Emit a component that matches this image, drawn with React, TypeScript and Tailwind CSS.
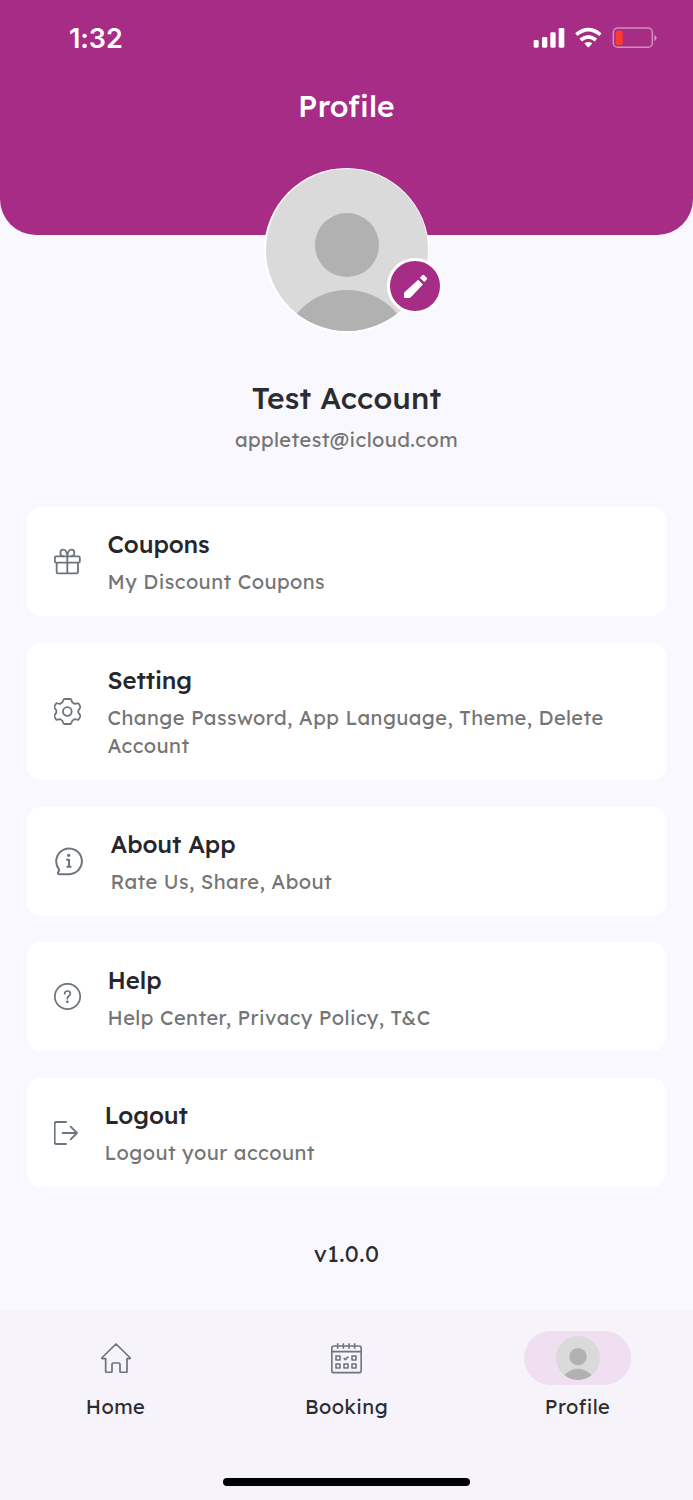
import React from 'react';

const GiftIcon = () => (
  <svg viewBox="102 145 81 81" className="w-[27px] h-[27px] shrink-0" fill="none" stroke="currentColor" strokeWidth="5.5" strokeLinejoin="round">
    <rect x="104.5" y="170" width="75" height="19" rx="4" />
    <path d="M110 189v28q0 4 4 4h56q4 0 4-4v-28M142 170v51" />
    <path d="M142 170c-1-11-4-20-12-20-6 0-9 4-9 9 0 7 5 11 11 11M142 170c1-11 4-20 12-20 6 0 9 4 9 9 0 7-5 11-11 11" />
  </svg>
);

const GearIcon = () => (
  <svg viewBox="101 174 81 81" className="w-[27px] h-[27px] shrink-0" fill="none" stroke="currentColor" strokeWidth="5.5" strokeLinejoin="round">
    <path d="M132 177h18q2 0 3 3l2 5q1 3 4 4l3 2q2 1 4 0l5-1q3-1 4 1l5 9q1 2-1 4l-3 4q-2 2-2 4v5q0 2 2 4l3 4q2 2 1 4l-5 9q-1 2-4 1l-5-1q-2-1-4 0l-3 2q-3 1-4 4l-2 5q-1 3-3 3h-18q-2 0-3-3l-2-5q-1-3-4-4l-3-2q-2-1-4 0l-5 1q-3 1-4-1l-5-9q-1-2 1-4l3-4q2-2 2-4v-5q0-2-2-4l-3-4q-2-2-1-4l5-9q1-2 4-1l5 1q2 1 4 0l3-2q3-1 4-4l2-5q1-3 3-3z" />
    <circle cx="141" cy="214.5" r="13" />
  </svg>
);

const InfoIcon = () => (
  <svg viewBox="102 138 90 90" className="w-[30px] h-[30px] shrink-0" fill="none" stroke="currentColor" strokeWidth="6" strokeLinecap="round" strokeLinejoin="round">
    <path d="M147 222.5h-28q-6 0-5-5l3-6q1-2-1-5a38.5 38.5 0 1 1 31 16z" />
    <path d="M141 179h6v21M142 200h10" />
    <circle cx="146" cy="166" r="5" fill="currentColor" stroke="none" />
  </svg>
);

const HelpIcon = () => (
  <svg viewBox="101 144 81 81" className="w-[27px] h-[27px] shrink-0" fill="none" stroke="currentColor" strokeWidth="5.2" strokeLinecap="round" strokeLinejoin="round">
    <circle cx="141.5" cy="184.5" r="38" />
    <path d="M133 176c0-5 4-8 9-8s8 3 8 8c0 7-9 7-9 15" />
    <circle cx="141" cy="200.5" r="4.2" fill="currentColor" stroke="none" />
  </svg>
);

const LogoutIcon = () => (
  <svg viewBox="101 556 72 72" className="w-[24px] h-[24px] shrink-0" fill="none" stroke="currentColor" strokeWidth="5.5" strokeLinecap="round" strokeLinejoin="round">
    <path d="M137 559h-29q-5 0-5 5v56q0 5 5 5h29M127 592h43M151 573l19 19-19 19" />
  </svg>
);

const HomeIcon = () => (
  <svg viewBox="122 129 90 90" className="w-[30px] h-[30px]" fill="none" stroke="currentColor" strokeWidth="5.2" strokeLinejoin="round">
    <path d="M167 132l43 42q-1 2-3 2h-7v38q0 3-3 3h-16q-2 0-2-3v-21q0-4-4-4h-16q-4 0-4 4v21q0 3-3 3h-13q-3 0-3-3v-38h-9q-2 0-3-2z" />
  </svg>
);

const CalendarIcon = () => (
  <svg viewBox="814 129 93 93" className="w-[31px] h-[31px]" fill="none" stroke="currentColor" strokeWidth="4.8" strokeLinejoin="round">
    <rect x="816.5" y="138" width="88" height="80" rx="6" />
    <path d="M816 155h88M834 130v16M851 130v16M868 130v16M885 130v16" />
    <path d="M829 168h12v12h-12zM877 168h12v12h-12zM829 192h12v12h-12zM853 192h12v12h-12zM877 192h12v12h-12z" />
    <path d="M852 174l5 5 9-9" />
  </svg>
);

const PencilIcon = () => (
  <svg viewBox="455 355 80 80" className="w-[27px] h-[27px]" fill="white">
    <path d="M464 429q-3 0-3-3v-11q0-2 2-4l40-36 14 14-36 38q-2 2-5 2z" />
    <path d="M508 369l7-7q3-3 6 0l7 7q3 3 0 6l-7 7z" />
  </svg>
);

const Avatar: React.FC<{ className: string }> = ({ className }) => (
  <svg viewBox="0 0 162 162" className={className}>
    <rect width="162" height="162" fill="#dadada" />
    <circle cx="81" cy="76" r="32" fill="#b1b1b1" />
    <circle cx="81" cy="186" r="65" fill="#b1b1b1" />
  </svg>
);

const MENU = [
  { title: 'Coupons', detail: 'My Discount Coupons', icon: <GiftIcon /> },
  { title: 'Setting', detail: 'Change Password, App Language, Theme, Delete Account', icon: <GearIcon /> },
  { title: 'About App', detail: 'Rate Us, Share, About', icon: <InfoIcon /> },
  { title: 'Help', detail: 'Help Center, Privacy Policy, T&C', icon: <HelpIcon /> },
  { title: 'Logout', detail: 'Logout your account', icon: <LogoutIcon /> },
];

const StatusBar = () => (
  <div className="flex justify-between items-start pt-[22px] pl-[69px] pr-[35px] h-[76px]">
    <span className="font-['Inter',sans-serif] text-[27px] leading-[33px] font-semibold tracking-[-0.1px]">1:32</span>
    <svg viewBox="40 30 375 75" className="w-[125px] h-[25px] mt-[3px]" fill="white">
      <rect x="42" y="75" width="15" height="23" rx="4" />
      <rect x="67" y="66" width="16" height="32" rx="4" />
      <rect x="92" y="52" width="16" height="46" rx="4" />
      <rect x="117" y="39" width="17" height="59" rx="4" />
      <g fill="none" stroke="white" strokeWidth="11">
        <path d="M170 59q36-30 72 0" />
        <path d="M183 75q23-19 46 0" />
      </g>
      <path d="M194 85q12-8 24 0l-9 10q-3 3-6 0z" />
      <rect x="281" y="39" width="117" height="58" rx="13" fill="none" stroke="#d08fbd" strokeWidth="4.5" />
      <path d="M404 60q7 3 7 9t-7 9z" fill="#d08fbd" />
      <rect x="288" y="47" width="21" height="43" rx="6" fill="#ff3b30" />
    </svg>
  </div>
);

const BottomNav = () => (
  <nav className="h-[191px] bg-[#f7f3fb] flex flex-col justify-between">
    <div className="grid grid-cols-3 pt-[22px] text-[20px] leading-7 text-[#2b2c31] tracking-[0.45px]">
      <div className="flex flex-col items-center gap-2">
        <div className="h-[54px] flex items-center text-[#6c757d]"><HomeIcon /></div>
        <span>Home</span>
      </div>
      <div className="flex flex-col items-center gap-2">
        <div className="h-[54px] flex items-center text-[#6c757d]"><CalendarIcon /></div>
        <span>Booking</span>
      </div>
      <div className="flex flex-col items-center gap-2">
        <div className="w-[107px] h-[54px] rounded-full bg-[#efdff0] flex items-center justify-center">
          <Avatar className="w-[44px] h-[44px] rounded-full" />
        </div>
        <span>Profile</span>
      </div>
    </div>
    <div className="w-[247px] h-[8px] rounded-full bg-black self-center mb-[14px]"></div>
  </nav>
);

const App: React.FC = () => {
  return (
    <div className="w-full h-[1500px] bg-[#f9f8ff] flex flex-col overflow-hidden font-['Lexend','Inter',sans-serif]">
      {/* Header */}
      <header className="h-[234.5px] shrink-0 bg-[#a72c85] rounded-b-[36px] text-white">
        <StatusBar />
        <h1 className="text-center text-[30px] leading-[61px] font-medium tracking-[0.2px]">Profile</h1>
      </header>

      {/* Avatar overlaps the header */}
      <div className="relative -mt-[67px] w-[165px] h-[165px] self-center">
        <div className="w-full h-full rounded-full bg-white p-[1.5px]">
          <Avatar className="w-full h-full rounded-full" />
        </div>
        <button className="absolute left-[123px] top-[90.5px] w-[56px] h-[56px] rounded-full border-[3px] border-white bg-[#a72c85] flex items-center justify-center">
          <PencilIcon />
        </button>
      </div>

      <section className="mt-[45px] flex flex-col items-center">
        <h2 className="text-[30px] leading-10 font-medium tracking-[0.15px] text-[#2b2c31]">Test Account</h2>
        <p className="mt-2 text-[20px] leading-7 tracking-[0.44px] text-[#757575]">appletest@icloud.com</p>
      </section>

      {/* Menu */}
      <section className="mt-[53.5px] px-[27px] flex flex-col gap-[26.8px]">
        {MENU.map(item => (
          <div key={item.title} className="min-h-[109px] bg-white rounded-[14px] pl-[26.5px] pr-[27px] pt-[22px] pb-[19px] flex items-center gap-[27px]">
            <div className="text-[#6c757d] -mt-[3px]">{item.icon}</div>
            <div>
              <h3 className="text-[24px] leading-[30px] font-medium tracking-[-0.1px] text-[#26272c]">{item.title}</h3>
              <p className="mt-[9px] text-[20px] leading-[28.5px] tracking-[0.44px] text-[#757575]">{item.detail}</p>
            </div>
          </div>
        ))}
      </section>

      <p className="mt-[51px] text-center text-[23px] leading-8 text-[#2b2c31] tracking-[0.4px]">v1.0.0</p>

      <div className="mt-auto">
        <BottomNav />
      </div>
    </div>
  );
};

export default App;
